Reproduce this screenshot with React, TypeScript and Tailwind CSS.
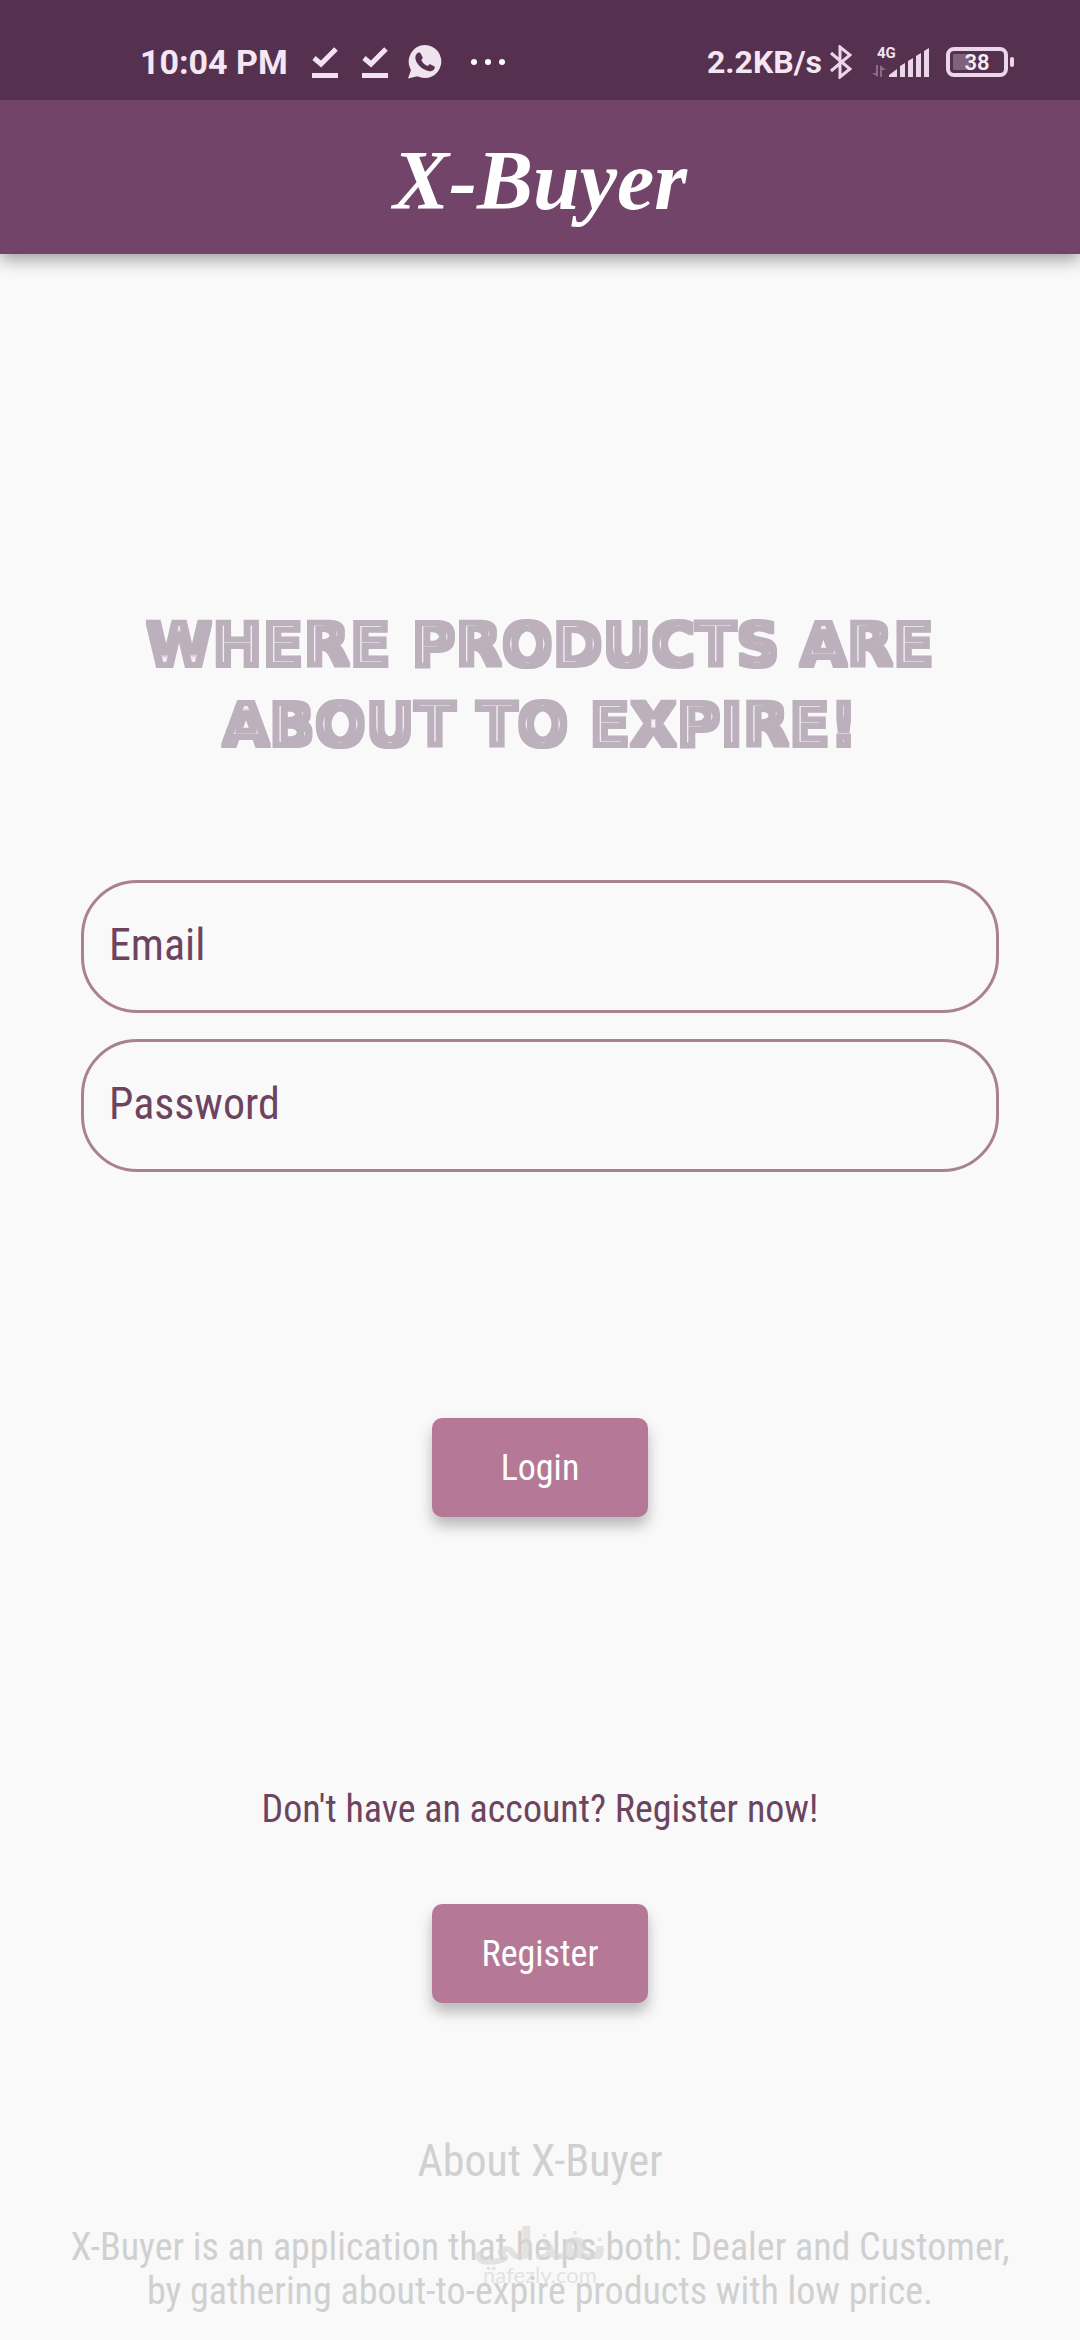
import React from "react";

const condensed = "font-['Roboto_Condensed','Roboto',sans-serif]";

function CheckLine() {
  return (
    <svg width="26" height="32" viewBox="0 0 26 32" fill="none" stroke="#f3e2f2" aria-hidden="true">
      <path d="M2 12 9 18 24 3" strokeWidth="5" />
      <path d="M0 29.5H26" strokeWidth="5" />
    </svg>
  );
}

function ChatCall() {
  return (
    <svg width="34" height="34" viewBox="0 0 34 34" aria-hidden="true">
      <path d="M17 0a16.5 16.5 0 1 1-7.5 31.3L0 33.5l3-8.6A16.5 16.5 0 0 1 17 0Z" fill="#efe3ee" />
      <path
        d="M9 8.500c1.500-1.500 3.200-1 3.800.2l1.800 3.600c.3.900-.2 1.500-1.400 2.700 1.400 2.900 3.500 5 6.600 6.100 1.200-1.500 1.800-2 2.700-1.600l3.700 1.800c1 .6.600 2.100-.2 3.100-1.500 1.700-4 2.400-7.300 1.100C12.500 23.200 8.800 19 7.600 14.500c-.6-2.500-.1-4.500 1.400-6Z"
        fill="#55314f"
      />
    </svg>
  );
}

function Dots() {
  return (
    <svg width="36" height="6" viewBox="0 0 36 6" fill="#ffffff" aria-hidden="true">
      <circle cx="4" cy="3" r="3" />
      <circle cx="18" cy="3" r="3" />
      <circle cx="32" cy="3" r="3" />
    </svg>
  );
}

function Bluetooth() {
  return (
    <svg width="22" height="34" viewBox="0 0 22 34" fill="none" stroke="#ecd6ea" strokeWidth="3" aria-hidden="true">
      <path d="M1 8 20 24 10 32V2L20 10 1 26" />
    </svg>
  );
}

function Signal() {
  return (
    <svg width="58" height="34" viewBox="0 0 58 34" role="img" aria-label="4G signal">
      <text x="5" y="13" fontFamily="Roboto, sans-serif" fontSize="15" fontWeight="700" fill="#f3e2f2">
        4G
      </text>
      <g fill="#8d6a88">
        <path d="M4 20H6V32L0 28H4Z" />
        <path d="M8 32V20L14 25H10V32Z" />
      </g>
      <g fill="#ecd6ea">
        <path d="M17 32V30L25 24V32Z" />
        <path d="M28 32V21L33 18V32Z" />
        <path d="M36 32V16L41 13V32Z" />
        <path d="M44 32V11L49 8V32Z" />
        <path d="M52 32V6L57 3V32Z" />
      </g>
    </svg>
  );
}

function Battery() {
  return (
    <svg width="68" height="30" viewBox="0 0 68 30" role="img" aria-label="Battery 38 percent">
      <rect x="2" y="2" width="58" height="26" rx="6" fill="none" stroke="#ecd6ea" strokeWidth="4" />
      <rect x="7" y="7" width="18" height="16" rx="1" fill="#81627e" />
      <rect x="64" y="10" width="4" height="10" rx="2" fill="#ecd6ea" />
      <text x="31" y="23" textAnchor="middle" fontFamily="Roboto, sans-serif" fontSize="22" fontWeight="600" fill="#f7ebf6">
        38
      </text>
    </svg>
  );
}

function StatusBar() {
  return (
    <div className="flex items-center justify-between bg-[#55314f] pt-[42px] pr-[66px] pb-[18px] pl-[140px] font-['Roboto',sans-serif] leading-10 font-bold text-[#f5e6f4]">
      <div className="flex items-center">
        <span className="text-[34px]">10:04 PM</span>
        <span className="ml-6 flex items-center gap-6">
          <CheckLine />
          <CheckLine />
        </span>
        <span className="ml-5">
          <ChatCall />
        </span>
        <span className="ml-7">
          <Dots />
        </span>
      </div>
      <div className="flex items-center">
        <span className="text-[32px]">2.2KB/s</span>
        <span className="ml-2">
          <Bluetooth />
        </span>
        <span className="ml-5">
          <Signal />
        </span>
        <span className="ml-4">
          <Battery />
        </span>
      </div>
    </div>
  );
}

function Field({ label, type }: { label: string; type: string }) {
  return (
    <input
      type={type}
      aria-label={label}
      placeholder={label}
      className={`${condensed} block w-full rounded-[56px] border-[3px] border-[#a9828c] bg-transparent px-[25px] pt-[36px] pb-[38px] text-[44px] leading-[53px] text-[#6d4460] outline-none placeholder:text-[#6d4460] placeholder:opacity-100`}
    />
  );
}

function ActionButton({ children, type }: { children: React.ReactNode; type: "submit" | "button" }) {
  return (
    <button
      type={type}
      className={`${condensed} min-w-[216px] rounded-[10px] bg-[#b57896] px-12 pt-[29px] pb-[27px] text-[36px] leading-[43px] text-white shadow-[0_9px_14px_rgba(0,0,0,0.26)]`}
    >
      {children}
    </button>
  );
}

/* Widens the letters a little and draws a thin pale line along their centre. */
function InlineLetterFilter() {
  return (
    <svg width="0" height="0" className="absolute" aria-hidden="true">
      <filter id="inline-letters" x="-2%" y="-5%" width="104%" height="110%">
        <feMorphology in="SourceGraphic" operator="dilate" radius="2" result="body" />
        <feMorphology in="SourceAlpha" operator="erode" radius="5 4" result="core" />
        <feFlood floodColor="#f4edf4" />
        <feComposite in2="core" operator="in" result="line" />
        <feMerge>
          <feMergeNode in="body" />
          <feMergeNode in="line" />
        </feMerge>
      </filter>
    </svg>
  );
}

export default function App() {
  return (
    <div className="min-h-screen bg-[#f9f9f9]">
      <InlineLetterFilter />
      <StatusBar />
      <header className="relative bg-[#734469] pt-[31px] pb-[23px] text-center shadow-[0_6px_16px_rgba(0,0,0,0.36)] [clip-path:inset(0_0_-30px_0)]">
        <h1 className="font-['Liberation_Serif',serif] text-[84px] leading-[100px] font-bold text-white italic">X-Buyer</h1>
      </header>

      <main className="flex flex-col items-center pt-[351px]">
        <h2 className="max-w-[900px] text-center font-['DejaVu_Sans',sans-serif] text-[60px] leading-[80px] font-bold text-[#bbb0bb] [filter:url(#inline-letters)]">
          WHERE PRODUCTS ARE
          <br />
          ABOUT TO EXPIRE!
        </h2>

        <form className="mt-[115px] flex w-full flex-col items-center px-[81px]" onSubmit={(e) => e.preventDefault()}>
          <div className="flex w-full flex-col gap-[26px]">
            <Field label="Email" type="email" />
            <Field label="Password" type="password" />
          </div>
          <div className="mt-[246px]">
            <ActionButton type="submit">Login</ActionButton>
          </div>
        </form>

        <p className={`${condensed} mt-[266px] text-[38px] leading-[52px] text-[#6d4460]`}>Don't have an account? Register now!</p>
        <div className="mt-[69px]">
          <ActionButton type="button">Register</ActionButton>
        </div>

        <section className={`${condensed} mt-[130px] w-full text-center text-[#d0d0d0]`}>
          <h3 className="text-[44px] leading-[56px]">About X-Buyer</h3>
          <div className="relative mt-[36px] pb-6">
            <p className="text-[38px] leading-[44px]">
              X-Buyer is an application that helps both: Dealer and Customer,
              <br />
              by gathering about-to-expire products with low price.
            </p>
            <div className="absolute inset-x-0 top-0 flex flex-col items-center text-[#d8d8d8]/70">
              <span lang="ar" dir="rtl" className="font-['DejaVu_Sans',sans-serif] text-[44px] leading-[38px] font-bold">
                نفذلي
              </span>
              <span className="font-['Lato',sans-serif] text-[22px] leading-[24px]">nafezly.com</span>
            </div>
          </div>
        </section>
      </main>
    </div>
  );
}
